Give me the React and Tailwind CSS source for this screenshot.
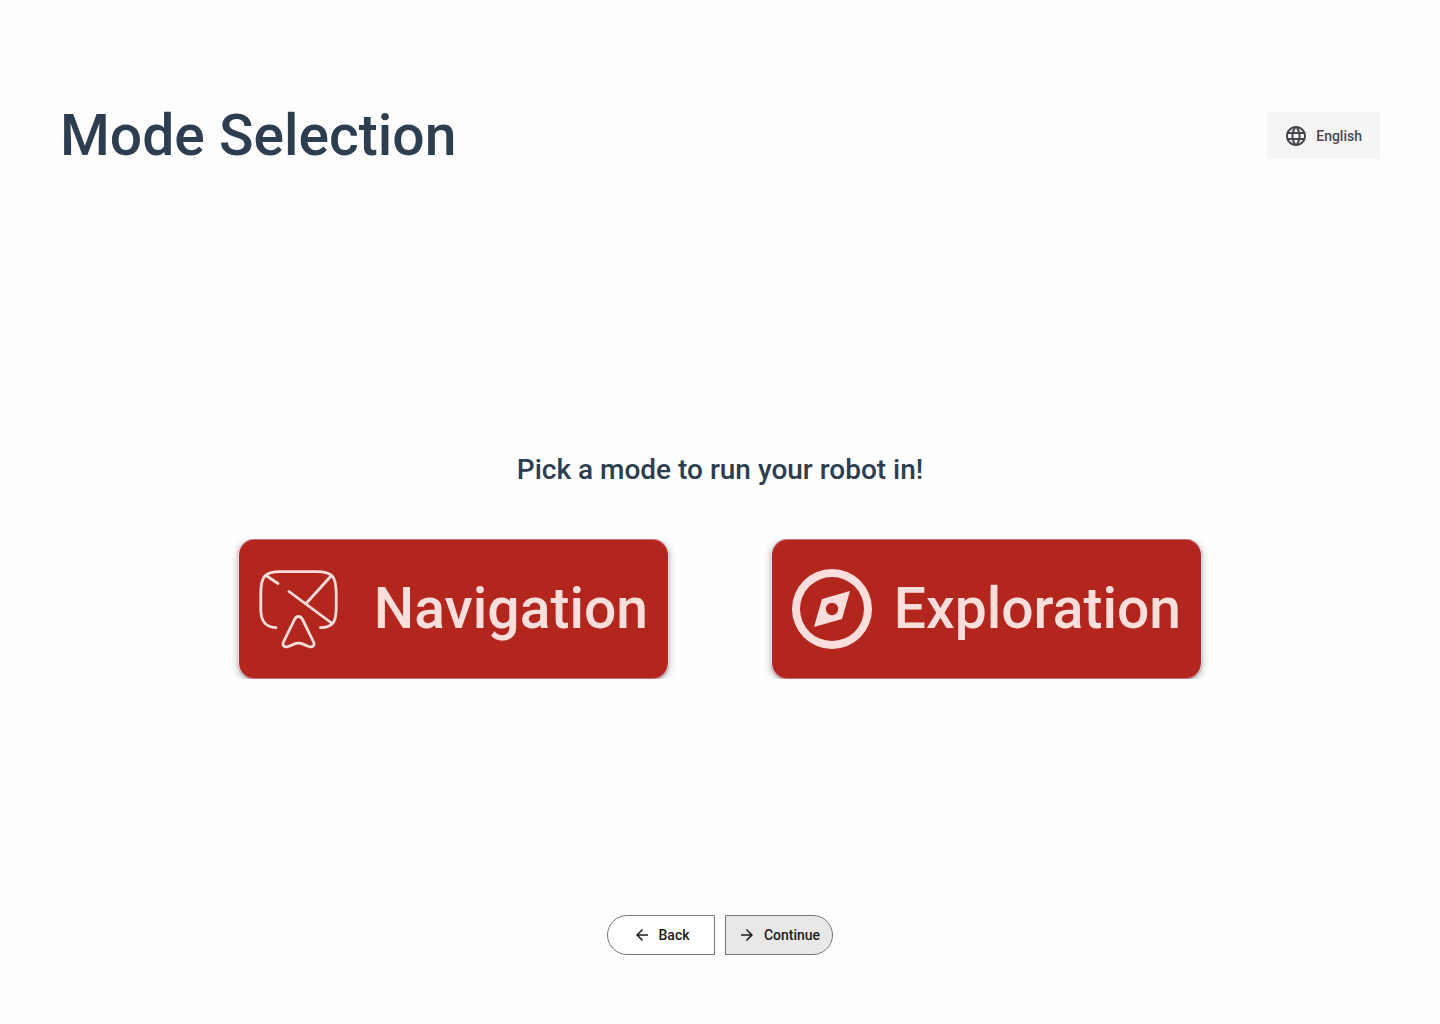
function GlobeIcon() {
  return (
    <svg viewBox="0 0 24 24" className="size-6 shrink-0 fill-[#49454f]" aria-hidden="true">
      <path d="M11.99 2C6.47 2 2 6.48 2 12s4.47 10 9.99 10C17.52 22 22 17.52 22 12S17.52 2 11.99 2zm6.93 6h-2.95a15.65 15.65 0 0 0-1.38-3.56A8.03 8.03 0 0 1 18.92 8zM12 4.04c.83 1.2 1.48 2.53 1.91 3.96h-3.82c.43-1.43 1.08-2.76 1.91-3.96zM4.26 14C4.1 13.36 4 12.69 4 12s.1-1.36.26-2h3.38c-.08.66-.14 1.32-.14 2s.06 1.34.14 2H4.26zm.82 2h2.95c.32 1.25.78 2.45 1.38 3.56A7.99 7.99 0 0 1 5.08 16zm2.95-8H5.08a7.99 7.99 0 0 1 4.33-3.56A15.65 15.65 0 0 0 8.03 8zM12 19.96c-.83-1.2-1.48-2.53-1.91-3.96h3.82c-.43 1.43-1.08 2.76-1.91 3.96zM14.34 14H9.66c-.09-.66-.16-1.32-.16-2s.07-1.35.16-2h4.68c.09.65.16 1.32.16 2s-.07 1.34-.16 2zm.25 5.56c.6-1.11 1.06-2.31 1.38-3.56h2.95a8.03 8.03 0 0 1-4.33 3.56zM16.36 14c.08-.66.14-1.32.14-2s-.06-1.34-.14-2h3.38c.16.64.26 1.31.26 2s-.1 1.36-.26 2h-3.38z" />
    </svg>
  );
}

function NavigationIcon() {
  return (
    <svg
      viewBox="0 0 80 80"
      className="size-20 shrink-0 fill-none stroke-[#f9dedc] stroke-[2.800]"
      strokeLinecap="round"
      strokeLinejoin="round"
      aria-hidden="true"
    >
      <path d="M17 58.7C7 58 2 53 1.8 41V24C2 7 6 2.6 21 2.6H58C73 2.6 77 7 77.200 24V39C77.200 54 73 58.700 61.500 58.700" />
      <path d="M7 6.500L19 14.500M30 22.500L72.500 54M72.500 6.500L47.500 34" />
      <path d="M35.500 50.500C37.500 46.500 41.500 46.500 43.500 50.500L54.300 72.500C56.500 77 53 79 49 77.300L44 75.100C40.500 73.700 38.500 73.700 35 75.100L30 77.300C26 79 22.500 77 24.700 72.500Z" />
    </svg>
  );
}

function ExplorationIcon() {
  return (
    <svg viewBox="0 0 80 80" className="size-20 shrink-0 fill-[#f9dedc]" fillRule="evenodd" aria-hidden="true">
      <path d="M40 0a40 40 0 1 0 0 80a40 40 0 1 0 0-80zm0 8a32 32 0 1 1 0 64a32 32 0 1 1 0-64z" />
      <path d="M58 22L50 50L22 58L30 30zM40 33.800a6.200 6.200 0 1 0 0 12.400a6.200 6.200 0 1 0 0-12.400z" />
    </svg>
  );
}

function ArrowIcon({ path }) {
  return (
    <svg viewBox="0 0 24 24" className="size-[18px] shrink-0 fill-[#1d1b20]" aria-hidden="true">
      <path d={path} />
    </svg>
  );
}

function ModeButton({ icon, label }) {
  return (
    <div className="min-w-0 max-w-[431px] flex-1 [clip-path:inset(0_-8px)]">
      <button
        type="button"
        className="flex h-[140px] w-full items-center justify-between rounded-2xl border-x border-[#e8def8] bg-[#b3261e] px-5 text-[57px] leading-16 font-medium text-[#f9dedc] shadow-[0_2px_6px_2px_rgba(0,0,0,0.15),0_1px_2px_rgba(0,0,0,0.3),inset_0_1px_0_rgba(232,222,248,0.4),inset_0_-1px_0_rgba(232,222,248,0.4)]"
      >
        {icon}
        <span>{label}</span>
      </button>
    </div>
  );
}

export default function App() {
  return (
    <div className="flex min-h-screen flex-col bg-[#fefefe] font-['Roboto',sans-serif]">
      <header className="flex items-center justify-between px-15 pt-[103px]">
        <h1 className="text-[57px] leading-[65px] font-medium text-[#2c3e50]">Mode Selection</h1>
        <button
          type="button"
          className="flex h-[47px] items-center gap-2 bg-[#f5f5f5] pr-[18px] pl-[17px] text-sm leading-6 font-medium text-[#49454f]"
        >
          <GlobeIcon />
          English
        </button>
      </header>

      <main className="flex flex-1 flex-col items-center justify-center px-15 pt-12">
        <h2 className="text-[28px] leading-9 font-medium text-[#2c3e50]">Pick a mode to run your robot in!</h2>
        <div className="mt-[51px] flex w-full justify-center gap-[102px]">
          <ModeButton icon={<NavigationIcon />} label="Navigation" />
          <ModeButton icon={<ExplorationIcon />} label="Exploration" />
        </div>
      </main>

      <footer className="flex justify-center gap-[10px] pb-[69px] text-sm leading-5 font-medium text-[#1d1b20]">
        <button
          type="button"
          className="flex h-10 w-27 items-center justify-center gap-2 rounded-l-full border border-[#79747e] bg-white"
        >
          <ArrowIcon path="M20 11H7.830l5.590-5.590L12 4l-8 8 8 8 1.410-1.410L7.830 13H20v-2z" />
          Back
        </button>
        <button
          type="button"
          className="flex h-10 w-27 items-center justify-center gap-2 rounded-r-full border border-[#79747e] bg-[#e8e8e8]"
        >
          <ArrowIcon path="M12 4l-1.410 1.410L16.170 11H4v2h12.170l-5.580 5.590L12 20l8-8z" />
          Continue
        </button>
      </footer>
    </div>
  );
}
